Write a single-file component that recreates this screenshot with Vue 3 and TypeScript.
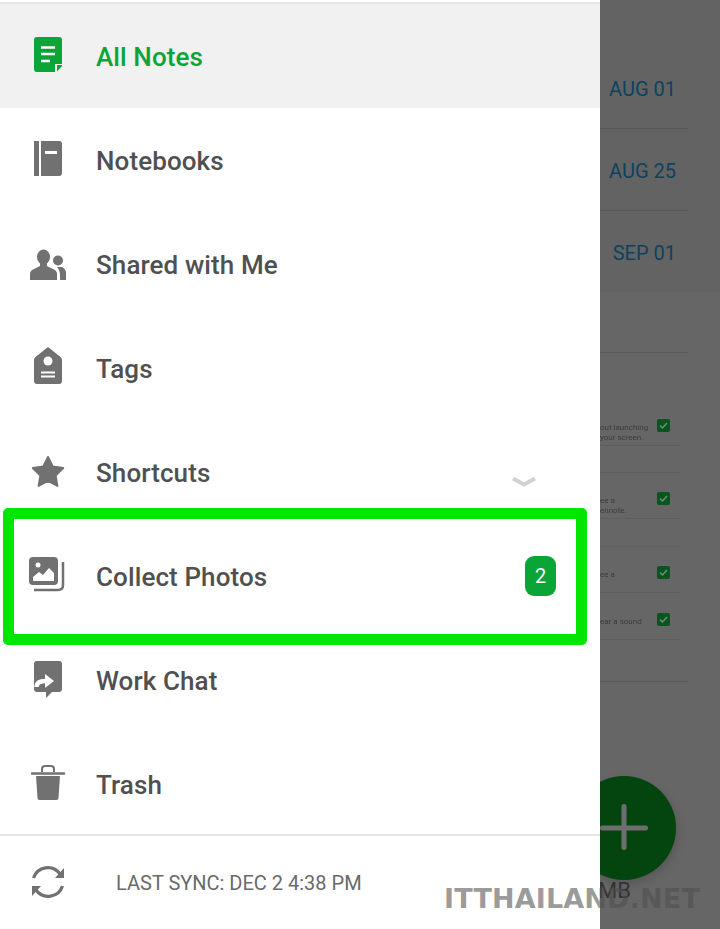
<template>
  <div class="screen">
    <aside class="drawer">
      <nav class="menu">
        <div
          v-for="item in items"
          :key="item.label"
          class="row"
          :class="{ active: item.icon === 'notes' }"
        >
          <svg class="icon" viewBox="0 0 48 48" width="48" height="48">
            <template v-if="item.icon === 'notes'">
              <path d="M13 4h22a3 3 0 0 1 3 3v24h-7v8H13a3 3 0 0 1-3-3V7a3 3 0 0 1 3-3z" fill="#0aa537" />
              <path d="M33 32h5v1l-5 5.500z" fill="#0aa537" />
              <path d="M17 14.500h14M17 21h14M17 28h9" stroke="#fff" stroke-width="2.300" fill="none" />
            </template>
            <template v-else-if="item.icon === 'book'">
              <path d="M10 4h5v35h-5z" fill="#717171" />
              <path d="M17 4h18a3 3 0 0 1 3 3v29a3 3 0 0 1-3 3H17z" fill="#717171" />
              <path d="M21 14h12v3H21z" fill="#fff" />
            </template>
            <template v-else-if="item.icon === 'people'">
              <ellipse cx="19.500" cy="16" rx="6.500" ry="7.500" fill="#717171" />
              <path d="M6 39v-6q0-3 3-4.500l7-3.500 v-3h7v3l7 3.500q3 1.500 3 4.500v6z" fill="#717171" />
              <circle cx="34" cy="19.500" r="5" fill="#717171" />
              <path d="M36 39h6v-7q0-4-4-6h-5q3 3 3 7z" fill="#717171" />
            </template>
            <template v-else-if="item.icon === 'tag'">
              <path d="M24 2l12.500 10q1.500 1 1.500 3v21a3 3 0 0 1-3 3H13a3 3 0 0 1-3-3V15q0-2 1.500-3z" fill="#717171" />
              <circle cx="24" cy="16" r="4.500" fill="#fff" />
              <path d="M17 27.500h14M17 31.500h14" stroke="#fff" stroke-width="2.200" fill="none" />
            </template>
            <template v-else-if="item.icon === 'star'">
              <path
                d="M24 8l4.700 9.500 10.500 1.600-7.600 7.400 1.800 10.400-9.400-5-9.400 5 1.800-10.400-7.600-7.400 10.500-1.600z"
                fill="#717171"
                stroke="#717171"
                stroke-width="2"
                stroke-linejoin="round"
              />
            </template>
            <template v-else-if="item.icon === 'photos'">
              <rect x="5" y="4" width="29" height="28" rx="4" fill="#717171" />
              <circle cx="14" cy="12" r="2.500" fill="#fff" />
              <path d="M9 28v-4l6-5 4 3 6-7 5 5v8z" fill="#fff" />
              <path d="M39 9v23q0 5-5 5H10" stroke="#717171" stroke-width="2.500" fill="none" />
            </template>
            <template v-else-if="item.icon === 'chat'">
              <path d="M13 4h22a3 3 0 0 1 3 3v25a3 3 0 0 1-3 3h-7l-6 6v-6h-9a3 3 0 0 1-3-3V7a3 3 0 0 1 3-3z" fill="#717171" />
              <path d="M12.500 30c0-4 3-6 9-6" stroke="#fff" stroke-width="4.500" fill="none" />
              <path d="M21 17l9 7-9 7z" fill="#fff" />
            </template>
            <template v-else-if="item.icon === 'trash'">
              <path d="M8 12.500h32" stroke="#717171" stroke-width="2.500" stroke-linecap="round" />
              <path d="M18 11V8q0-3 3-3h6q3 0 3 3v3" stroke="#717171" stroke-width="2" fill="none" />
              <path d="M12 15h24l-1.500 22q0 2-2 2h-17q-2 0-2-2z" fill="#717171" />
            </template>
          </svg>
          <span class="label">{{ item.label }}</span>
          <svg v-if="item.icon === 'star'" class="chevron" viewBox="0 0 26 12" width="26" height="12">
            <path d="M2 2.500l11 6 11-6" stroke="#d2d2d2" stroke-width="4" fill="none" />
          </svg>
          <span v-if="item.badge" class="badge">{{ item.badge }}</span>
        </div>
      </nav>
      <footer class="sync">
        <svg class="icon" viewBox="0 0 48 48" width="48" height="48">
          <path d="M9.500 19A15 15 0 0 1 36 15M38.500 27A15 15 0 0 1 12 31" stroke="#717171" stroke-width="3.200" fill="none" />
          <path d="M40 9v10h-9zM8 37V27h9z" fill="#717171" />
        </svg>
        <span class="sync-text">LAST SYNC: DEC 2 4:38 PM</span>
      </footer>
    </aside>

    <section class="behind">
      <div class="dates">
        <div v-for="date in dates" :key="date" class="date">{{ date }}</div>
      </div>
      <div class="tips">
        <template v-for="tip in tips" :key="tip.lines[0]">
          <div class="tip-gap" :class="{ faint: tip.faint }" :style="{ height: tip.gap + 'px' }"></div>
          <div class="tip">
            <div class="tip-text">
              <div v-for="line in tip.lines" :key="line">{{ line }}</div>
            </div>
            <span class="check">
              <svg viewBox="0 0 13 13" width="13" height="13">
                <path d="M3 6.500l2.500 2.500L10 4" stroke="#6f8f75" stroke-width="1.500" fill="none" />
              </svg>
            </span>
          </div>
        </template>
      </div>
      <div class="fab">
        <svg viewBox="0 0 48 48" width="48" height="48">
          <path d="M24 2.500v41M2.500 24h43" stroke="#6e6e6e" stroke-width="5" stroke-linecap="round" />
        </svg>
      </div>
      <span class="storage">MB</span>
    </section>

    <div class="highlight"></div>
    <div class="watermark">ITTHAILAND.NET</div>
  </div>
</template>

<script setup lang="ts">
interface MenuItem {
  label: string;
  icon: string;
  badge?: number;
}

interface Tip {
  lines: string[];
  gap: number;
  faint: boolean;
}

const items: MenuItem[] = [
  { label: "All Notes", icon: "notes" },
  { label: "Notebooks", icon: "book" },
  { label: "Shared with Me", icon: "people" },
  { label: "Tags", icon: "tag" },
  { label: "Shortcuts", icon: "star" },
  { label: "Collect Photos", icon: "photos", badge: 2 },
  { label: "Work Chat", icon: "chat" },
  { label: "Trash", icon: "trash" },
];

const dates = ["AUG 01", "AUG 25", "SEP 01"];

const tips: Tip[] = [
  { lines: ["out launching", "your screen."], gap: 47, faint: false },
  { lines: ["ee a", "ennote."], gap: 27, faint: true },
  { lines: ["ee a"], gap: 28, faint: true },
  { lines: ["ear a sound"], gap: 1, faint: false },
];
</script>

<style>
html,
body {
  margin: 0;
  background: #fff;
}
</style>

<style scoped>
.screen {
  position: relative;
  display: flex;
  width: 720px;
  height: 929px;
  overflow: hidden;
  font-family: Roboto, "Liberation Sans", sans-serif;
}
.drawer {
  display: flex;
  flex-direction: column;
  flex: none;
  width: 600px;
  height: 929px;
  background: #fff;
}
.menu {
  margin-top: 2px;
  border-top: 2px solid #e6e6e6;
  border-bottom: 2px solid #e6e6e6;
}
.row {
  display: flex;
  align-items: center;
  gap: 24px;
  height: 104px;
  padding: 2px 0 0 24px;
  box-sizing: border-box;
}
.row:last-child {
  height: 102px;
  padding-top: 4px;
}
.row.active {
  background: #f1f1f1;
}
.row.active .label {
  color: #0aa537;
}
.icon {
  flex: none;
}
.label {
  flex: 1;
  font-size: 26px;
  font-weight: 500;
  letter-spacing: 0.1px;
  color: #505050;
}
.chevron {
  margin: 18px 63px 0 0;
}
.badge {
  display: flex;
  align-items: center;
  justify-content: center;
  width: 31px;
  height: 40px;
  margin: 0 44px 2px 0;
  border-radius: 9px;
  background: #0aa537;
  color: #fff;
  font-size: 20px;
}
.sync {
  display: flex;
  align-items: center;
  gap: 44px;
  flex: 1;
  padding-left: 24px;
}
.sync-text {
  font-size: 20px;
  color: #6a6a6a;
}
.behind {
  position: relative;
  flex: 1;
  overflow: hidden;
  background: #666;
}
.dates {
  padding-top: 47px;
  background: #636363;
}
.date {
  display: flex;
  align-items: center;
  justify-content: flex-end;
  box-sizing: border-box;
  width: 88px;
  height: 82px;
  padding: 2px 12px 0 0;
  border-bottom: 1px solid #585858;
  color: #0d425e;
  font-size: 20px;
}
.date:last-child {
  border-bottom: 0;
  height: 81px;
}
.tips {
  width: 88px;
  margin-top: 60px;
  border-top: 1px solid #5a5a5a;
}
.tips::after {
  content: "";
  display: block;
  margin-top: 41px;
  border-bottom: 1px solid #5a5a5a;
}
.tip-gap {
  width: 80px;
}
.tip-gap.faint {
  border-bottom: 1px solid #606060;
  box-sizing: border-box;
}
.tip {
  display: flex;
  align-items: flex-start;
  justify-content: space-between;
  box-sizing: border-box;
  width: 80px;
  height: 46px;
  padding-right: 10px;
  border-bottom: 1px solid #5e5e5e;
}
.tip-text {
  margin-top: 23px;
  font-size: 8px;
  line-height: 10px;
  color: #3c3c3c;
  white-space: nowrap;
  filter: blur(0.4px);
}
.check {
  display: block;
  flex: none;
  width: 13px;
  height: 13px;
  margin-top: 19px;
  border-radius: 2px;
  background: #0a5420;
}
.check svg {
  display: block;
}
.fab {
  position: absolute;
  top: 776px;
  left: -28px;
  display: flex;
  align-items: center;
  justify-content: center;
  width: 104px;
  height: 104px;
  border-radius: 50%;
  background: #03440f;
  box-shadow: 2px 4px 8px rgba(0, 0, 0, 0.15);
}
.storage {
  position: absolute;
  top: 878px;
  right: 89px;
  font-size: 22px;
  color: #333;
}
.highlight {
  position: absolute;
  top: 508px;
  left: 3px;
  box-sizing: border-box;
  width: 584px;
  height: 137px;
  border: 11px solid #00e600;
  border-radius: 5px;
}
.watermark {
  position: absolute;
  top: 883px;
  left: 444px;
  font-family: "DejaVu Sans", sans-serif;
  font-size: 27px;
  font-weight: 700;
  letter-spacing: 0.15px;
  color: rgba(78, 78, 78, 0.58);
  white-space: nowrap;
}
</style>
